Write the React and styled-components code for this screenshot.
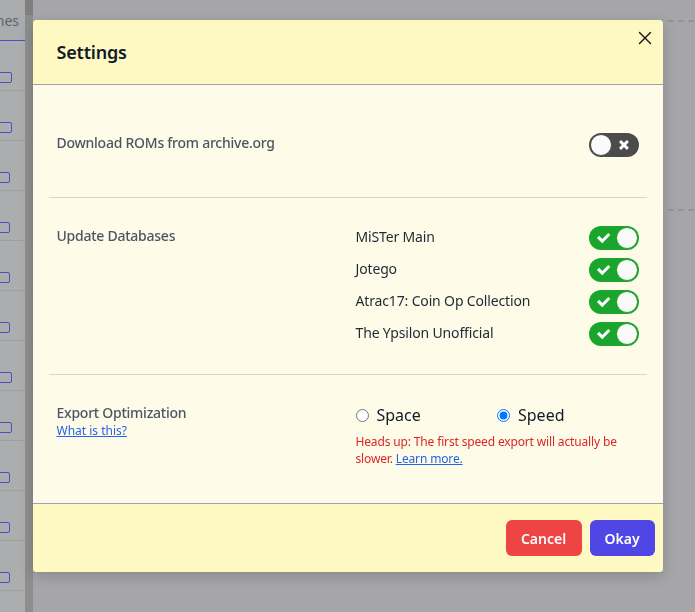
import React, { useState } from 'react';
import styled, { createGlobalStyle } from 'styled-components';
import { X } from 'lucide-react';

const GlobalStyle = createGlobalStyle`
  html, body {
    margin: 0;
    padding: 0;
  }
  body {
    font-family: 'Noto Sans', 'Open Sans', sans-serif;
    background: #a6a6a8;
    overflow: hidden;
  }
  * {
    box-sizing: border-box;
  }
`;

/* page behind the dialog, already dimmed */
const Page = styled.div`
  display: flex;
  width: 695px;
  height: 612px;
  background: #a6a6a8;
  overflow: hidden;
`;

const Sidebar = styled.aside`
  width: 25px;
  flex: none;
  display: flex;
  flex-direction: column;
  background: #acadae;
  overflow: hidden;
`;

const SideTab = styled.div`
  height: 41px;
  flex: none;
  display: flex;
  align-items: center;
  justify-content: flex-end;
  padding-right: 6px;
  border-bottom: 1px solid #4b50c2;
  background: #aaabac;
  color: #5d6470;
  font-size: 14px;
  white-space: nowrap;
`;

const SideRow = styled.div`
  height: 50px;
  flex: none;
  display: flex;
  align-items: flex-end;
  padding-bottom: 7px;
  border-bottom: 1px solid #9e9fa0;
`;

const SideBox = styled.span`
  display: block;
  width: ${p => p.$w}px;
  height: 11px;
  margin-left: -6px;
  border: 1px solid #4b50c2;
  border-radius: 2px;
`;

const ScrollTrack = styled.div`
  width: 8px;
  flex: none;
  background: #8e8e8f;
  &::before {
    content: '';
    display: block;
    height: 15px;
    background: #7f7f80;
  }
`;

const Main = styled.main`
  flex: 1;
  padding-top: 20px;
  display: flex;
  justify-content: flex-end;
`;

const DashedBox = styled.div`
  width: 120px;
  height: 191px;
  margin-right: -20px;
  border-top: 2px dashed #949496;
  border-bottom: 2px dashed #949496;
`;

/* dialog */
const Backdrop = styled.div`
  position: fixed;
  inset: 0;
  display: flex;
  justify-content: center;
  align-items: flex-start;
  padding-top: 20px;
`;

const Modal = styled.div`
  width: 630px;
  display: flex;
  flex-direction: column;
  background: #fefce8;
  border-radius: 4px;
  overflow: hidden;
  box-shadow: 0 4px 14px rgba(0, 0, 0, 0.18);
`;

const Header = styled.header`
  height: 65px;
  display: flex;
  justify-content: space-between;
  align-items: center;
  padding: 0 7px 0 24px;
  background: #fef9c3;
  border-bottom: 1px solid #9ca3af;
`;

const Title = styled.h2`
  margin: 0;
  font-size: 18px;
  font-weight: 600;
  letter-spacing: -0.2px;
  color: #111827;
`;

const CloseButton = styled.button`
  align-self: flex-start;
  margin-top: 7px;
  padding: 0;
  border: 0;
  background: none;
  color: #111;
  display: flex;
  cursor: pointer;
`;

const Body = styled.div`
  padding: 0 16px;
`;

const Section = styled.section`
  display: grid;
  grid-template-columns: 1fr 1fr;
  column-gap: 16px;
  padding: ${p => p.$top}px 8px ${p => p.$bottom}px;
  border-bottom: ${p => (p.$last ? 'none' : '1px solid #d4d6da')};
`;

const LabelCol = styled.div`
  padding-top: 4px;
`;

const Label = styled.div`
  font-size: 14px;
  line-height: 20px;
  font-weight: 500;
  letter-spacing: -0.25px;
  color: #4b5563;
`;

const HelpLink = styled.a`
  display: block;
  font-size: 12px;
  line-height: 16px;
  color: #2563eb;
  text-decoration: underline;
`;

const Row = styled.div`
  height: 32px;
  display: flex;
  align-items: center;
  justify-content: ${p => (p.$end ? 'flex-end' : 'space-between')};
`;

const ItemName = styled.span`
  padding-bottom: 4px;
  font-size: 14px;
  letter-spacing: -0.15px;
  color: #1f2937;
`;

const Track = styled.span`
  position: relative;
  display: inline-block;
  width: 50px;
  height: 24px;
  border-radius: 30px;
  background: ${p => (p.$on ? '#1aa52c' : '#4b4b4b')};
  cursor: pointer;
`;

const Thumb = styled.span`
  position: absolute;
  top: 1px;
  left: ${p => (p.$on ? '27px' : '1px')};
  width: 22px;
  height: 22px;
  border-radius: 50%;
  border: 1px solid ${p => (p.$on ? '#1aa52c' : '#4b4b4b')};
  background: #fafafa;
`;

const TrackIcon = styled.svg`
  position: absolute;
  top: 0;
  bottom: 0;
  margin: auto 0;
  ${p => (p.$side === 'left' ? 'left: 8px;' : 'right: 10px;')}
`;

const RadioGroup = styled.div`
  height: 32px;
  display: grid;
  grid-template-columns: 1fr 1fr;
  align-items: center;
`;

const RadioLabel = styled.label`
  display: flex;
  align-items: center;
  gap: 8px;
  font-size: 16px;
  color: #111827;
  input {
    margin: 0;
    width: 13px;
    height: 13px;
  }
`;

const Warning = styled.p`
  margin: 2px 0 0;
  font-size: 12px;
  line-height: 17px;
  letter-spacing: -0.15px;
  color: #dc2626;
  a {
    color: #2563eb;
  }
`;

const Footer = styled.footer`
  display: flex;
  justify-content: flex-end;
  gap: 8px;
  padding: 16px 8px;
  background: #fef9c3;
  border-top: 1px solid #9ca3af;
`;

const Button = styled.button`
  width: ${p => p.$w}px;
  height: 36px;
  padding: 0;
  border: 0;
  border-radius: 6px;
  background: ${p => p.$bg};
  color: #fff;
  font-family: inherit;
  font-size: 14px;
  font-weight: 600;
  cursor: pointer;
`;

function Toggle({ on, onChange }) {
  return (
    <Track $on={on} onClick={onChange}>
      <TrackIcon $side="left" width="14" height="11" viewBox="0 0 14 11">
        <path
          d="M11.264 0L5.26 6.004 2.103 2.847 0 4.95l5.26 5.26 8.108-8.107L11.264 0"
          fill="#fff"
          fillRule="evenodd"
        />
      </TrackIcon>
      <TrackIcon $side="right" width="10" height="10" viewBox="0 0 10 10">
        <path
          d="M9.9 2.12L7.78 0 4.95 2.828 2.12 0 0 2.12l2.83 2.83L0 7.776 2.123 9.9 4.95 7.07 7.78 9.9 9.9 7.776 7.072 4.95 9.9 2.12"
          fill="#fff"
          fillRule="evenodd"
        />
      </TrackIcon>
      <Thumb $on={on} />
    </Track>
  );
}

const boxWidths = [6, 6, 4, 4, 4, 4, 6, 6, 4, 4, 4];

export default function App() {
  const [archive, setArchive] = useState(false);
  const [dbs, setDbs] = useState([
    { name: 'MiSTer Main', on: true },
    { name: 'Jotego', on: true },
    { name: 'Atrac17: Coin Op Collection', on: true },
    { name: 'The Ypsilon Unofficial', on: true },
  ]);
  const [mode, setMode] = useState('speed');

  const flip = i =>
    setDbs(dbs.map((d, j) => (j === i ? { ...d, on: !d.on } : d)));

  return (
    <>
      <GlobalStyle />
      <Page>
        <Sidebar>
          <SideTab>Machines</SideTab>
          {boxWidths.map((w, i) => (
            <SideRow key={i}>
              <SideBox $w={w + 12} />
            </SideRow>
          ))}
        </Sidebar>
        <ScrollTrack />
        <Main>
          <DashedBox />
        </Main>
      </Page>

      <Backdrop>
        <Modal>
          <Header>
            <Title>Settings</Title>
            <CloseButton aria-label="Close">
              <X size={22} strokeWidth={1.5} />
            </CloseButton>
          </Header>

          <Body>
            <Section $top={44} $bottom={36}>
              <LabelCol>
                <Label>Download ROMs from archive.org</Label>
              </LabelCol>
              <Row $end>
                <Toggle on={archive} onChange={() => setArchive(!archive)} />
              </Row>
            </Section>

            <Section $top={24} $bottom={24}>
              <LabelCol>
                <Label>Update Databases</Label>
              </LabelCol>
              <div>
                {dbs.map((d, i) => (
                  <Row key={d.name}>
                    <ItemName>{d.name}</ItemName>
                    <Toggle on={d.on} onChange={() => flip(i)} />
                  </Row>
                ))}
              </div>
            </Section>

            <Section $top={24} $bottom={36} $last>
              <LabelCol>
                <Label>Export Optimization</Label>
                <HelpLink href="#">What is this?</HelpLink>
              </LabelCol>
              <div>
                <RadioGroup>
                  <RadioLabel>
                    <input
                      type="radio"
                      name="opt"
                      checked={mode === 'space'}
                      onChange={() => setMode('space')}
                    />
                    Space
                  </RadioLabel>
                  <RadioLabel>
                    <input
                      type="radio"
                      name="opt"
                      checked={mode === 'speed'}
                      onChange={() => setMode('speed')}
                    />
                    Speed
                  </RadioLabel>
                </RadioGroup>
                <Warning>
                  Heads up: The first speed export will actually be slower.{' '}
                  <a href="#">Learn more.</a>
                </Warning>
              </div>
            </Section>
          </Body>

          <Footer>
            <Button $bg="#ef4444" $w={76}>Cancel</Button>
            <Button $bg="#4f46e5" $w={65}>Okay</Button>
          </Footer>
        </Modal>
      </Backdrop>
    </>
  );
}
